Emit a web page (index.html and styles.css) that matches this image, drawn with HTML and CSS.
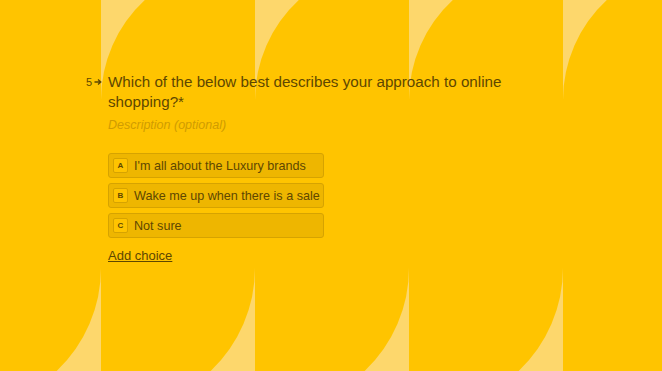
FILE: index.html
```html
<!DOCTYPE html>
<html lang="en">
<head>
<meta charset="utf-8">
<title>Question</title>
<link rel="stylesheet" href="styles.css">
</head>
<body>
<main class="page">
  <section class="question">
    <div class="q-head">
      <div class="q-num"><span>5</span><svg class="arrow" width="8" height="8" viewBox="0 0 8 8"><path d="M0.5 4H6.5M4 1.5L6.8 4L4 6.5" fill="none" stroke="currentColor" stroke-width="1.3"/></svg></div>
      <h1 class="q-title">Which of the below best describes your approach to online shopping?*</h1>
    </div>
    <div class="q-body">
      <p class="q-desc">Description (optional)</p>
      <ul class="choices">
        <li class="choice"><span class="key">A</span><span class="label">I'm all about the Luxury brands</span></li>
        <li class="choice"><span class="key">B</span><span class="label">Wake me up when there is a sale</span></li>
        <li class="choice"><span class="key">C</span><span class="label">Not sure</span></li>
      </ul>
      <a class="add" href="#">Add choice</a>
    </div>
  </section>
</main>
</body>
</html>
```
FILE: styles.css
```css
html, body {
  margin: 0;
  padding: 0;
  height: 100%;
  overflow: hidden;
}
body {
  background-color: #ffc400;
  background-image: url("data:image/svg+xml,%3Csvg xmlns='http://www.w3.org/2000/svg' width='154' height='371' viewBox='0 0 154 371'%3E%3Cpath d='M101,0 H144.8 A136,136 0 0 0 101,100 Z' fill='%23fdd76c'/%3E%3Cpath d='M101,268 A142,142 0 0 1 56.7,371 H101 Z' fill='%23fdd76c'/%3E%3C/svg%3E");
  background-repeat: repeat-x;
  background-size: 154px 371px;
  background-position: 0 0;
  font-family: "Liberation Sans", Arial, sans-serif;
  color: #5e4700;
}
.page {
  padding: 72px 0 0 84px;
}
.q-head {
  display: flex;
  align-items: flex-start;
}
.q-num {
  width: 22px;
  padding-left: 2px;
  display: flex;
  align-items: center;
  gap: 2px;
  font-size: 11px;
  padding-top: 4px;
  color: #5e4700;
}
.arrow {
  display: block;
}
.q-title {
  margin: 0;
  font-size: 15.2px;
  font-weight: normal;
  line-height: 20px;
  width: 420px;
}
.q-body {
  padding-left: 24px;
}
.q-desc {
  margin: 4px 0 0;
  font-size: 12.5px;
  font-style: italic;
  color: #d09c00;
  line-height: 18px;
}
.choices {
  list-style: none;
  margin: 19px 0 0;
  padding: 0;
  display: flex;
  flex-direction: column;
  gap: 5px;
}
.choice {
  width: 216px;
  height: 25px;
  box-sizing: border-box;
  border: 1px solid #d6a300;
  border-radius: 3px;
  background: #eeb600;
  display: flex;
  align-items: center;
  padding-left: 4px;
  gap: 6px;
}
.key {
  width: 15px;
  height: 15px;
  box-sizing: border-box;
  border: 1px solid #d6a300;
  border-radius: 2px;
  background: #ffc400;
  font-size: 8px;
  font-weight: bold;
  display: flex;
  align-items: center;
  justify-content: center;
}
.label {
  font-size: 12.6px;
}
.add {
  display: inline-block;
  margin-top: 10px;
  font-size: 13px;
  line-height: 16px;
  color: #5e4700;
  text-decoration: underline;
}
```
